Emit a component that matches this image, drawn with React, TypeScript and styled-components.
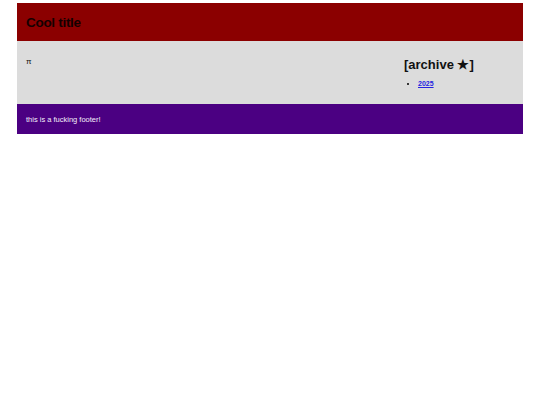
import React from "react";
import styled, { createGlobalStyle } from "styled-components";

const Global = createGlobalStyle`
  html, body { margin: 0; padding: 0; background: #fff; }
  body { font-family: "Liberation Sans", Arial, Helvetica, sans-serif; }
`;

const Page = styled.div`
  width: 506px;
  margin: 3px auto 0;
`;

const Header = styled.header`
  background: #8b0000;
  height: 38px;
  padding: 0 9px;
  display: flex;
  align-items: center;
`;

const Title = styled.h1`
  margin: 0;
  font-size: 13.5px;
  font-weight: bold;
  color: #140000;
  letter-spacing: -0.3px;
`;

const Main = styled.main`
  background: #dcdcdc;
  height: 63px;
  box-sizing: border-box;
  padding: 16px 9px 0;
  display: grid;
  grid-template-columns: 1fr 110px;
  align-items: start;
`;

const Content = styled.p`
  margin: 0;
  font-size: 8px;
  line-height: 9px;
  color: #111;
`;

const Aside = styled.aside``;

const AsideTitle = styled.h2`
  margin: 0;
  font-size: 13px;
  line-height: 15px;
  font-weight: bold;
  color: #111;
`;

const List = styled.ul`
  margin: 7px 0 0;
  padding-left: 14px;
  font-size: 7px;
  line-height: 9px;
`;

const Item = styled.li``;

const Link = styled.a`
  color: #2424e0;
  font-weight: bold;
  text-decoration: underline;
`;

const Footer = styled.footer`
  background: #4b0082;
  height: 30px;
  padding: 0 9px;
  display: flex;
  align-items: center;
  color: #f4eefa;
  font-size: 7.5px;
`;

export default function App() {
  return (
    <>
      <Global />
      <Page>
        <Header>
          <Title>Cool title</Title>
        </Header>
        <Main>
          <Content>π</Content>
          <Aside>
            <AsideTitle>[archive ★]</AsideTitle>
            <List>
              <Item>
                <Link href="#">2025</Link>
              </Item>
            </List>
          </Aside>
        </Main>
        <Footer>this is a fucking footer!</Footer>
      </Page>
    </>
  );
}
